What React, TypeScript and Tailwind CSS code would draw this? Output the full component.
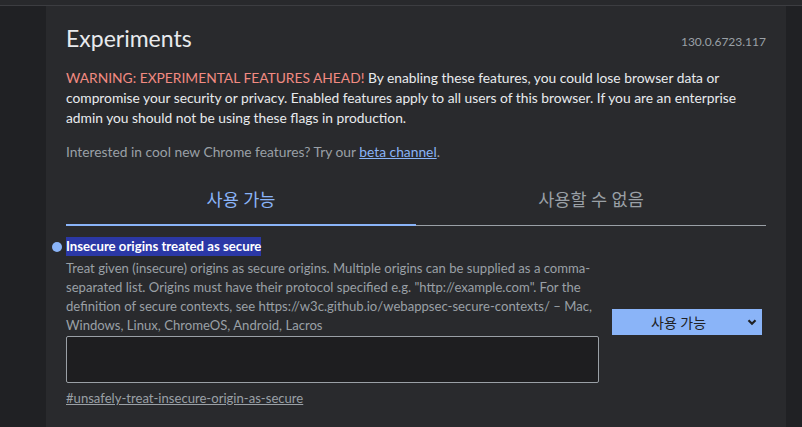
import React from "react";

// chrome://flags, dark theme, one flag selected
const FONT = { fontFamily: 'Lato, "Noto Sans", "Noto Sans CJK KR", sans-serif' };

function FlagRow() {
  return (
    <div className="relative flex items-start gap-[13px] pt-[11px]">
      <span className="absolute left-[-14px] top-[16px] h-[10px] w-[10px] rounded-full bg-[#8ab4f8]" />
      <div className="flex w-[533px] flex-col">
        <h3 className="w-fit bg-[#2b38a6] text-[13.2px] font-bold leading-[19px] text-white">
          Insecure origins treated as secure
        </h3>
        <p className="mt-[3px] whitespace-nowrap text-[13.1px] leading-[19px] text-[#9aa0a6]">
          Treat given (insecure) origins as secure origins. Multiple origins can be supplied as a comma-
          <br />
          separated list. Origins must have their protocol specified e.g. "http://example.com". For the
          <br />
          definition of secure contexts, see https://w3c.github.io/webappsec-secure-contexts/ – Mac,
          <br />
          Windows, Linux, ChromeOS, Android, Lacros
        </p>
        <textarea
          className="mt-[1px] h-[47px] w-full resize-none rounded-[2px] border border-[#9aa0a6] bg-[#1e1e20] outline-none"
          defaultValue=""
        />
        <a className="mt-[6px] w-fit text-[13.1px] leading-[18px] text-[#9aa0a6] underline">
          #unsafely-treat-insecure-origin-as-secure
        </a>
      </div>
      <div className="mt-[72px] flex h-[26px] w-[150px] items-center bg-[#8ab4f8] pl-[39px] pr-[4px] text-[14px] text-[#202124]">
        <span className="flex-1">사용 가능</span>
        <svg width="12" height="12" viewBox="0 0 12 12">
          <path d="M2.5 4.2 6 7.7 9.5 4.2" fill="none" stroke="#202124" strokeWidth="2.2" />
        </svg>
      </div>
    </div>
  );
}

export default function App() {
  return (
    <div className="flex h-[427px] w-[802px] flex-col overflow-hidden bg-[#202124]" style={FONT}>
      <div className="h-[6px] shrink-0 border-b border-[#3c3d41] bg-[#28292c]" />
      <div className="flex flex-1">
        <div className="w-[46px] shrink-0 bg-[#202124]" />
        <main className="w-[740px] shrink-0 bg-[#292a2d] px-[20px] pt-[18px]">
          <div className="flex items-end justify-between">
            <h1 className="text-[23px] leading-[28px] text-[#e8eaed]">Experiments</h1>
            <span className="mb-[1px] text-[12px] text-[#9aa0a6]">130.0.6723.117</span>
          </div>
          <p className="mt-[16px] whitespace-nowrap text-[13.8px] leading-[20px] text-[#e8eaed]">
            <span className="text-[#f28b82]">WARNING: EXPERIMENTAL FEATURES AHEAD!</span> By enabling
            these features, you could lose browser data or
            <br />
            compromise your security or privacy. Enabled features apply to all users of this browser. If
            you are an enterprise
            <br />
            admin you should not be using these flags in production.
          </p>
          <p className="mt-[14px] text-[13.8px] leading-[20px] text-[#9aa0a6]">
            Interested in cool new Chrome features? Try our{" "}
            <a className="text-[#8ab4f8] underline">beta channel</a>.
          </p>
          <div className="mt-[20px] flex">
            <div className="flex h-[44px] flex-1 items-start justify-center border-b-2 border-[#8ab4f8] pt-[5px] text-[17.5px] text-[#8ab4f8]">
              사용 가능
            </div>
            <div className="flex h-[44px] flex-1 items-start justify-center pt-[5px] text-[17.5px] text-[#9aa0a6]">
              <span>사용할 수 없음</span>
            </div>
          </div>
          <div className="-mt-[1px] ml-[350px] h-px bg-[#9aa0a6]" />
          <FlagRow />
        </main>
        <div className="flex-1 bg-[#202124]" />
      </div>
    </div>
  );
}
